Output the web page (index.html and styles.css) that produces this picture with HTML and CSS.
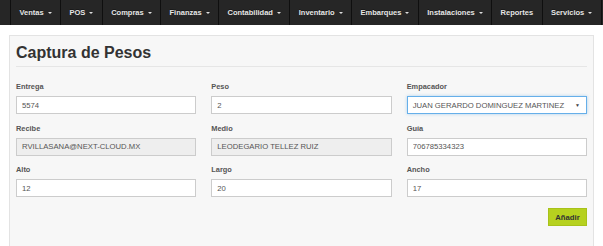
FILE: index.html
```html
<!DOCTYPE html>
<html lang="es">
<head>
  <meta charset="UTF-8" />
  <meta name="viewport" content="width=device-width, initial-scale=1" />
  <title>Captura de Pesos</title>
  <link rel="stylesheet" href="styles.css">
</head>
<body>

  <nav class="navbar">
    <ul class="nav-menu">
      <li>Ventas <span class="caret"></span></li>
      <li>POS <span class="caret"></span></li>
      <li>Compras <span class="caret"></span></li>
      <li>Finanzas <span class="caret"></span></li>
      <li>Contabilidad <span class="caret"></span></li>
      <li>Inventario <span class="caret"></span></li>
      <li>Embarques <span class="caret"></span></li>
      <li>Instalaciones <span class="caret"></span></li>
      <li>Reportes</li>
      <li>Servicios <span class="caret"></span></li>
    </ul>
  </nav>

  <div class="well">
    <h3 class="title">Captura de Pesos</h3>
    <hr />

    <div class="form-grid">
      <div class="field">
        <label>Entrega</label>
        <input type="text" value="5574" />
      </div>
      <div class="field">
        <label>Peso</label>
        <input type="text" value="2" />
      </div>
      <div class="field">
        <label>Empacador</label>
        <div class="select focus">
          <span>JUAN GERARDO DOMINGUEZ MARTINEZ</span>
          <span class="arrow">▼</span>
        </div>
      </div>

      <div class="field">
        <label>Recibe</label>
        <input type="text" value="RVILLASANA@NEXT-CLOUD.MX" readonly />
      </div>
      <div class="field">
        <label>Medio</label>
        <input type="text" value="LEODEGARIO TELLEZ RUIZ" readonly />
      </div>
      <div class="field">
        <label>Guía</label>
        <input type="text" value="706785334323" />
      </div>

      <div class="field">
        <label>Alto</label>
        <input type="text" value="12" />
      </div>
      <div class="field">
        <label>Largo</label>
        <input type="text" value="20" />
      </div>
      <div class="field">
        <label>Ancho</label>
        <input type="text" value="17" />
      </div>
    </div>

    <div class="actions">
      <button class="btn-add">Añadir</button>
    </div>
  </div>

</body>
</html>
```

FILE: styles.css
```css
body {
  margin: 0;
  font-family: "Liberation Sans", Arial, sans-serif;
  background-color: #fff;
  color: #333;
}
.navbar {
  height: 25px;
  background-color: #262626;
  padding-left: 10px;
}
.nav-menu {
  list-style: none;
  margin: 0;
  padding: 0;
  display: flex;
  height: 100%;
}
.nav-menu li {
  display: flex;
  align-items: center;
  padding: 0 8.4px;
  border-left: 1px solid #0f0f0f;
  font-size: 7.5px;
  font-weight: bold;
  color: #e6e6e6;
  text-shadow: 0 -1px 0 rgba(0, 0, 0, 0.4);
  white-space: pre;
}
.nav-menu li:last-child {
  border-right: 1px solid #0f0f0f;
}
.caret {
  display: inline-block;
  width: 0;
  height: 0;
  margin-left: 2px;
  border-top: 2.5px solid #ddd;
  border-left: 2px solid transparent;
  border-right: 2px solid transparent;
}
.well {
  margin: 10px 9px 0;
  padding: 7px 6px 30px;
  background-color: #f7f7f7;
  border: 1px solid #e3e3e3;
}
.title {
  margin: 0;
  font-size: 16px;
  line-height: 20px;
  font-weight: bold;
  color: #333;
}
hr {
  margin: 3px 0 0;
  border: 0;
  border-top: 1px solid #e6e6e6;
}
.form-grid {
  display: grid;
  grid-template-columns: 1fr 1fr 1fr;
  column-gap: 15px;
  row-gap: 8.5px;
  margin-top: 14px;
}
.field label {
  display: block;
  font-size: 7.4px;
  line-height: 11px;
  font-weight: bold;
  color: #555;
  margin-bottom: 4px;
}
.field input,
.select {
  display: block;
  box-sizing: border-box;
  width: 100%;
  height: 18px;
  padding: 0 5px;
  margin: 0;
  font-family: "Liberation Sans", Arial, sans-serif;
  font-size: 7.7px;
  color: #555;
  background-color: #fff;
  border: 1px solid #ccc;
  outline: none;
}
.field input[readonly] {
  background-color: #eee;
}
.select {
  display: flex;
  align-items: center;
  justify-content: space-between;
}
.select.focus {
  border-color: #66afe9;
  box-shadow: 0 0 3px rgba(102, 175, 233, 0.5);
}
.select .arrow {
  font-size: 5px;
  color: #444;
  margin-right: 1px;
}
.actions {
  display: flex;
  justify-content: flex-end;
  margin-top: 11px;
}
.btn-add {
  height: 18px;
  width: 39px;
  padding: 0;
  font-family: "Liberation Sans", Arial, sans-serif;
  font-size: 7.7px;
  font-weight: bold;
  color: #333;
  background-color: #b6d11f;
  border: 1px solid #a8c21a;
  cursor: pointer;
}
```
